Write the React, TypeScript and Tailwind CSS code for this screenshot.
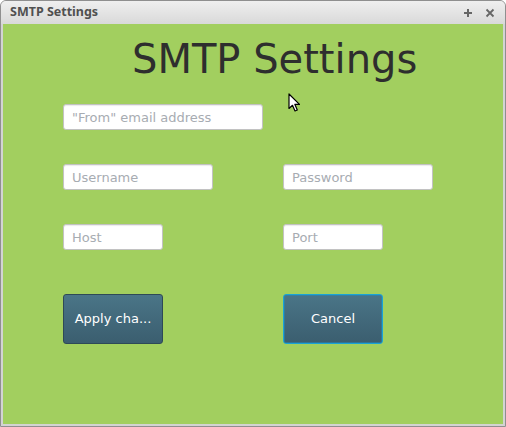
import React from "react";

const inputCls =
  "h-[26px] rounded-[3px] border border-[#c2c2c2] bg-white pl-[8px] text-[13px] text-[#333] placeholder:text-[#a7acb2] shadow-[inset_0_1px_1px_rgba(0,0,0,0.08)] outline-none";

export default function App() {
  return (
    <div className="relative flex h-[427px] w-[506px] flex-col overflow-hidden rounded-t-[6px] border border-[#8f8f8f] bg-[#d3d3d3]" style={{ fontFamily: '"DejaVu Sans", sans-serif' }}>
      <div className="flex h-[23px] shrink-0 items-center justify-between bg-gradient-to-b from-[#efefef] to-[#d9d9d9] pl-[9px] pr-[10px]">
        <span className="text-[12.5px] font-bold text-[#505050]" style={{ fontFamily: '"Noto Sans", sans-serif' }}>
          SMTP Settings
        </span>
        <div className="flex items-center gap-[12px] text-[#666]">
          <svg width="10" height="10" viewBox="0 0 10 10">
            <path d="M5 1v8M1 5h8" stroke="#666" strokeWidth="2" />
          </svg>
          <svg width="10" height="10" viewBox="0 0 10 10">
            <path d="M1.5 1.5l7 7M8.5 1.5l-7 7" stroke="#666" strokeWidth="1.8" />
          </svg>
        </div>
      </div>
      <div className="mx-[2px] mb-[2px] flex flex-1 flex-col bg-[#a2cf5f] pl-[60px]">
        <h1 className="ml-[69px] mt-[12px] text-[40px] font-normal leading-[46px] text-[#2e2e2e]">SMTP Settings</h1>
        <div className="mt-[22px] flex">
          <input className={`${inputCls} w-[200px]`} placeholder={'"From" email address'} />
        </div>
        <div className="mt-[34px] grid grid-cols-[220px_150px]">
          <input className={`${inputCls} w-[150px]`} placeholder="Username" />
          <input className={`${inputCls} w-[150px]`} placeholder="Password" type="password" />
        </div>
        <div className="mt-[34px] grid grid-cols-[220px_100px]">
          <input className={`${inputCls} w-[100px]`} placeholder="Host" />
          <input className={`${inputCls} w-[100px]`} placeholder="Port" />
        </div>
        <div className="mt-[44px] grid grid-cols-[220px_100px]">
          <button className="h-[50px] w-[100px] rounded-[3px] border border-[#2e4a57] bg-gradient-to-b from-[#4a7587] to-[#3b5e6f] text-[13px] text-white">
            Apply cha...
          </button>
          <button className="h-[50px] w-[100px] rounded-[3px] border border-[#1aa3d6] bg-gradient-to-b from-[#4a7587] to-[#3b5e6f] text-[13px] text-white shadow-[inset_0_0_0_1px_rgba(30,140,190,0.5)]">
            Cancel
          </button>
        </div>
      </div>
      <svg className="absolute left-[287px] top-[92px]" width="14" height="20" viewBox="0 0 14 20">
        <path d="M1 1 L1 15.5 L4.5 12.3 L7 18 L9.3 17 L6.9 11.4 L11.5 11.4 Z" fill="white" stroke="black" strokeWidth="1.2" strokeLinejoin="round" />
      </svg>
    </div>
  );
}
